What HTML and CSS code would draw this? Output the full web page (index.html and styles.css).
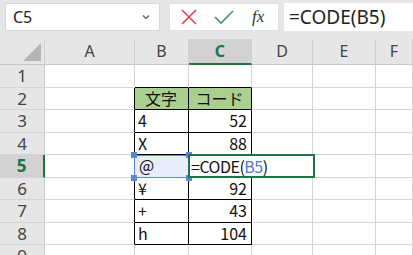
FILE: index.html
```html
<!DOCTYPE html>
<html lang="ja">
  <head>
    <meta charset="UTF-8" />
    <title>CODE</title>
    <link rel="stylesheet" href="styles.css">
  </head>
  <body>
    <div class="topbar">
      <div class="namebox">
        <span>C5</span>
        <svg class="chev" width="8" height="6" viewBox="0 0 8 6"><path d="M1 1.5 L4 4.5 L7 1.5" fill="none" stroke="#555" stroke-width="1.2"/></svg>
      </div>
      <div class="fbtns">
        <svg width="18" height="18" viewBox="0 0 18 18"><path d="M2 2 L16 16 M16 2 L2 16" stroke="#e0434f" stroke-width="1.6" fill="none"/></svg>
        <svg width="22" height="18" viewBox="0 0 22 18"><path d="M2 9 L8 15 L20 3" stroke="#3c9a5f" stroke-width="1.6" fill="none"/></svg>
        <span class="fx">fx</span>
      </div>
      <div class="finput">=CODE(B5)</div>
    </div>

    <div class="sheet">
      <div class="corner"><div class="tri"></div></div>
      <div class="ch">A</div>
      <div class="ch">B</div>
      <div class="ch sel">C</div>
      <div class="ch">D</div>
      <div class="ch">E</div>
      <div class="ch">F</div>

      <div class="rh">1</div>
      <div class="c"></div><div class="c tp"></div><div class="c tp"></div><div class="c"></div><div class="c"></div><div class="c"></div>

      <div class="rh">2</div>
      <div class="c lt"></div><div class="c t head">文字</div><div class="c t head">コード</div><div class="c"></div><div class="c"></div><div class="c"></div>

      <div class="rh">3</div>
      <div class="c lt"></div><div class="c t">4</div><div class="c t num">52</div><div class="c"></div><div class="c"></div><div class="c"></div>

      <div class="rh">4</div>
      <div class="c lt"></div><div class="c t">X</div><div class="c t num">88</div><div class="c"></div><div class="c"></div><div class="c"></div>

      <div class="rh rsel">5</div>
      <div class="c lt"></div>
      <!-- range reference of the formula -->
      <div class="c t ref">
        @
        <i class="h h1"></i><i class="h h2"></i><i class="h h3"></i><i class="h h4"></i>
      </div>
      <div class="c t active">
        <!-- cell being edited, runs over D5 -->
        <div class="edit">=CODE(<span class="rb">B5</span>)</div>
      </div>
      <div class="c"></div><div class="c"></div><div class="c"></div>

      <div class="rh">6</div>
      <div class="c lt"></div><div class="c t">¥</div><div class="c t num">92</div><div class="c"></div><div class="c"></div><div class="c"></div>

      <div class="rh">7</div>
      <div class="c lt"></div><div class="c t">+</div><div class="c t num">43</div><div class="c"></div><div class="c"></div><div class="c"></div>

      <div class="rh">8</div>
      <div class="c lt"></div><div class="c t">h</div><div class="c t num">104</div><div class="c"></div><div class="c"></div><div class="c"></div>

      <div class="rh">9</div>
      <div class="c"></div><div class="c"></div><div class="c"></div><div class="c"></div><div class="c"></div><div class="c"></div>
    </div>
  </body>
</html>
```

FILE: styles.css
```css
* {
  box-sizing: border-box;
}

body {
  margin: 0;
  width: 413px;
  height: 255px;
  overflow: hidden;
  background: #e6e6e6;
  font-family: "Noto Sans", "Liberation Sans", sans-serif;
}

.topbar {
  display: flex;
  height: 39px;
  padding: 3px 0 8px 5px;
}

.namebox {
  width: 155px;
  background: white;
  border: 1px solid #d8d8d8;
  display: flex;
  align-items: center;
  justify-content: space-between;
  padding: 0 9px 0 7px;
  font-size: 16px;
  color: #222;
}

.fbtns {
  width: 110px;
  margin-left: 9px;
  background: white;
  border: 1px solid #e0e0e0;
  display: flex;
  align-items: center;
  padding-left: 10px;
  gap: 15px;
}

.fx {
  font-family: "Liberation Serif", serif;
  font-style: italic;
  font-size: 17px;
  color: #333;
  margin-left: 2px;
}

.finput {
  flex: 1;
  margin-left: 5px;
  background: white;
  display: flex;
  align-items: center;
  padding-left: 5px;
  font-size: 19px;
  color: #222;
}

.sheet {
  display: grid;
  grid-template-columns: 45px 90px 54px 63px 61px 63px 37px;
  grid-template-rows: 26px 23px 22px 23px 22px 23px 22px 23px 22px 22px;
  background: white;
}

.corner {
  background: #e6e6e6;
  border-right: 1px solid #d0d0d0;
  border-bottom: 1px solid #c8c8c8;
  position: relative;
}

.tri {
  position: absolute;
  right: 3px;
  bottom: 3px;
  width: 0;
  height: 0;
  border-left: 18px solid transparent;
  border-bottom: 18px solid #b4b4b4;
}

.ch {
  background: #e6e6e6;
  border-right: 1px solid #d0d0d0;
  border-bottom: 1px solid #c8c8c8;
  text-align: center;
  font-size: 16px;
  line-height: 25px;
  color: #444;
}

.ch.sel {
  background: #d2d2d2;
  border-bottom: 2px solid #217346;
  color: #217346;
  font-weight: bold;
}

.rh {
  background: #e6e6e6;
  border-right: 1px solid #c8c8c8;
  border-bottom: 1px solid #d4d4d4;
  text-align: center;
  font-size: 17px;
  line-height: 22px;
  color: #444;
}

.rh.rsel {
  background: #d2d2d2;
  border-right: 2px solid #217346;
  color: #217346;
  font-weight: bold;
}

.c {
  border-right: 1px solid #d4d4d4;
  border-bottom: 1px solid #d4d4d4;
  font-family: "Noto Sans CJK JP", sans-serif;
  font-size: 16px;
  line-height: 21px;
  padding: 0 4px 0 3px;
  color: #111;
  white-space: nowrap;
  min-width: 0;
  overflow: visible;
}

.c.t {
  border-right-color: #000;
  border-bottom-color: #000;
}

.c.lt {
  border-right-color: #000;
}

.c.tp {
  border-bottom-color: #000;
}

.c.num {
  text-align: right;
}

.c.head {
  background: #a9d08e;
  text-align: center;
}

.c.ref {
  position: relative;
  border: 1px solid #5b87d8;
  margin-left: -1px;
  background: #e8eef9;
  padding-left: 4px;
  line-height: 19px;
}

.h {
  position: absolute;
  width: 6px;
  height: 6px;
  background: #5b87d8;
}

.h1 { left: -4px; top: -4px; }
.h2 { right: -4px; top: -4px; }
.h3 { left: -4px; bottom: -4px; }
.h4 { right: -4px; bottom: -4px; }

.c.active {
  position: relative;
  z-index: 1;
}

.edit {
  position: absolute;
  left: -1px;
  top: -1px;
  width: 127px;
  height: 24px;
  border: 2px solid #217346;
  background: white;
  line-height: 20px;
  padding-left: 1px;
  color: #111;
  letter-spacing: -0.5px;
}

.rb {
  color: #4f7ad0;
}
```
